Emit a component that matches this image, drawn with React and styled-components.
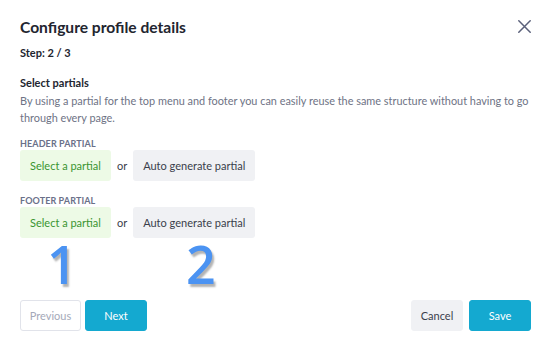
import styled, { createGlobalStyle } from "styled-components";

const Global = createGlobalStyle`
  body {
    margin: 0;
    background: #fff;
    font-family: Lato, "Open Sans", sans-serif;
    color: #2a2e3b;
  }
`

const Modal = styled.div`
  box-sizing: border-box;
  width: 550px;
  height: 351px;
  padding: 16px 19px 20px 20px;
  display: flex;
  flex-direction: column;
  position: relative;
`

const Header = styled.div`
  display: flex;
  justify-content: space-between;
  align-items: flex-start;
`

const Title = styled.h1`
  margin: 0;
  font-size: 15.6px;
  font-weight: 700;
  line-height: 22px;
  color: #22252f;
`

const Close = styled.button`
  border: none;
  background: none;
  padding: 0;
  margin: 4px 0 0 0;
  width: 13px;
  height: 13px;
  cursor: pointer;
  display: flex;
`

const Step = styled.div`
  margin-top: 8px;
  font-size: 11px;
  font-weight: 700;
  line-height: 14px;
  color: #22252f;
`

const SectionTitle = styled.div`
  margin-top: 16px;
  font-size: 11px;
  font-weight: 700;
  line-height: 14px;
  color: #22252f;
`

const Description = styled.p`
  margin: 2px -4px 0 0;
  font-size: 10.9px;
  line-height: 17px;
  color: #6e7385;
`

const Group = styled.div`
  margin-top: ${p => p.$top}px;
  display: flex;
  flex-direction: column;
`

const Label = styled.div`
  font-size: 9px;
  font-weight: 700;
  letter-spacing: 0.1px;
  color: #6a7089;
  text-transform: uppercase;
  line-height: 11px;
`

const Row = styled.div`
  margin-top: 1px;
  display: flex;
  align-items: center;
  gap: 6px;
`

const Choice = styled.button`
  height: 31px;
  padding: 0 10px;
  border: none;
  border-radius: 3px;
  font-family: inherit;
  font-size: 11px;
  background: ${p => (p.$green ? "#edfae6" : "#f0f1f4")};
  color: ${p => (p.$green ? "#3a9531" : "#3a3e4b")};
`

const Or = styled.span`
  font-size: 11px;
  color: #3a3e4b;
`

const Spacer = styled.div`
  flex: 1;
`

const Footer = styled.div`
  display: flex;
  align-items: center;
  justify-content: space-between;
`

const ButtonGroup = styled.div`
  display: flex;
  gap: ${p => p.$gap}px;
`

const Button = styled.button`
  height: 31px;
  width: ${p => p.$w}px;
  padding: 0;
  border-radius: 3px;
  font-family: inherit;
  font-size: 11px;
  box-sizing: border-box;
  border: 1px solid ${p =>
    p.$kind === "primary" ? "#14a9d0" : p.$kind === "outline" ? "#e1e3ea" : "#f0f1f4"};
  background: ${p =>
    p.$kind === "primary" ? "#14a9d0" : p.$kind === "outline" ? "#fff" : "#f0f1f4"};
  color: ${p =>
    p.$kind === "primary" ? "#fff" : p.$kind === "outline" ? "#a4a9b9" : "#3a3e4b"};
`

const Marker = styled.span`
  position: absolute;
  top: ${p => p.$y}px;
  left: ${p => p.$x}px;
  font-family: "Open Sans", sans-serif;
  font-size: 52px;
  font-weight: 600;
  line-height: 1;
  color: #4b93f2;
  text-shadow: 2px 3px 2px rgba(0, 0, 0, 0.3);
`

export default function App() {
  return (
    <>
      <Global />
      <Modal>
        <Header>
          <Title>Configure profile details</Title>
          <Close aria-label="Close">
            <svg width="13" height="13" viewBox="0 0 13 13">
              <path d="M0.8 0.8L12.2 12.2M12.2 0.8L0.8 12.2" stroke="#5a607a" strokeWidth="1.5" strokeLinecap="round" />
            </svg>
          </Close>
        </Header>
        <Step>Step: 2 / 3</Step>
        <SectionTitle>Select partials</SectionTitle>
        <Description>
          By using a partial for the top menu and footer you can easily reuse the same structure without having to go
          through every page.
        </Description>
        <Group $top={12}>
          <Label>Header partial</Label>
          <Row>
            <Choice $green>Select a partial</Choice>
            <Or>or</Or>
            <Choice>Auto generate partial</Choice>
          </Row>
        </Group>
        <Group $top={14}>
          <Label>Footer partial</Label>
          <Row>
            <Choice $green>Select a partial</Choice>
            <Or>or</Or>
            <Choice>Auto generate partial</Choice>
          </Row>
        </Group>
        <Spacer />
        <Footer>
          <ButtonGroup $gap={4}>
            <Button $kind="outline" $w={61}>Previous</Button>
            <Button $kind="primary" $w={62}>Next</Button>
          </ButtonGroup>
          <ButtonGroup $gap={6}>
            <Button $kind="secondary" $w={52}>Cancel</Button>
            <Button $kind="primary" $w={62}>Save</Button>
          </ButtonGroup>
        </Footer>
        <Marker $x={47} $y={238}>1</Marker>
        <Marker $x={186} $y={238}>2</Marker>
      </Modal>
    </>
  )
}
